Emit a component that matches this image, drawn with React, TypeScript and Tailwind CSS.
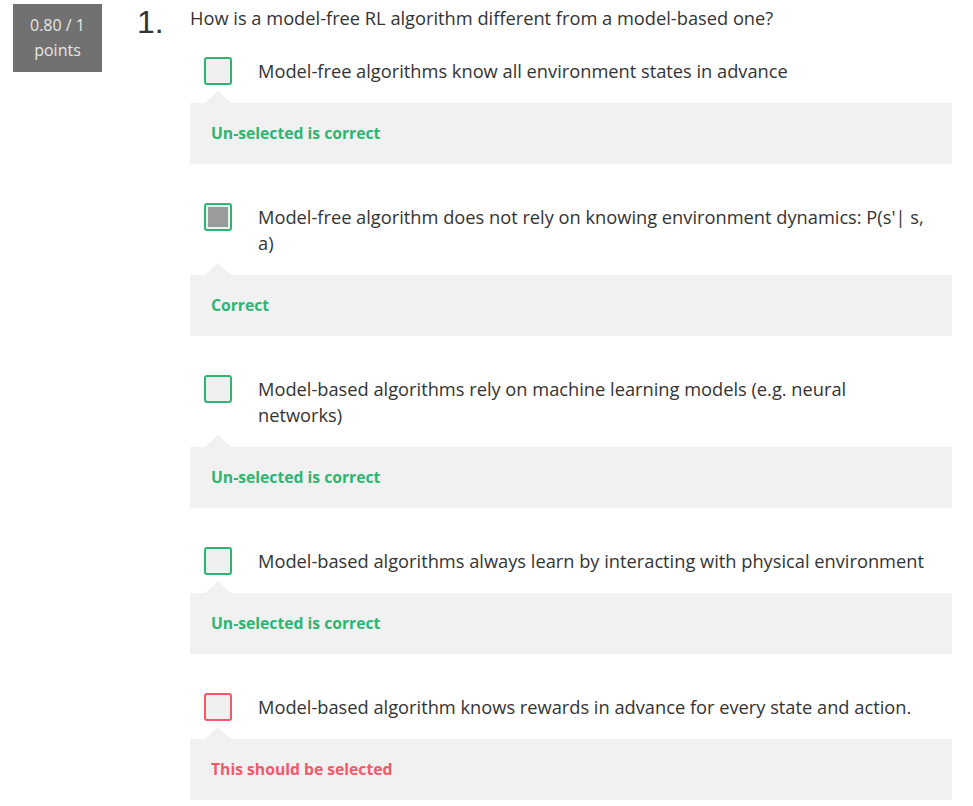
import React from 'react';

type Result = 'ok' | 'miss';

interface Option {
  text: string;
  checked: boolean;
  feedback: string;
  result: Result;
}

const options: Option[] = [
  {
    text: 'Model-free algorithms know all environment states in advance',
    checked: false,
    feedback: 'Un-selected is correct',
    result: 'ok',
  },
  {
    text: "Model-free algorithm does not rely on knowing environment dynamics: P(s'| s, a)",
    checked: true,
    feedback: 'Correct',
    result: 'ok',
  },
  {
    text: 'Model-based algorithms rely on machine learning models (e.g. neural networks)',
    checked: false,
    feedback: 'Un-selected is correct',
    result: 'ok',
  },
  {
    text: 'Model-based algorithms always learn by interacting with physical environment',
    checked: false,
    feedback: 'Un-selected is correct',
    result: 'ok',
  },
  {
    text: 'Model-based algorithm knows rewards in advance for every state and action.',
    checked: false,
    feedback: 'This should be selected',
    result: 'miss',
  },
];

const OptionRow: React.FC<{ option: Option }> = ({ option }) => {
  const ok = option.result === 'ok';
  return (
    <div>
      <div className="flex items-start pl-[14px]">
        {/* negative bottom margin so the box doesn't stretch the row */}
        <div
          className={`w-[28px] h-[28px] -mb-[4px] shrink-0 rounded-[3px] border-2 bg-[#f0f0f0] p-[2px] ${
            ok ? 'border-[#2db673]' : 'border-[#f4586a]'
          }`}
        >
          {option.checked && <div className="w-full h-full bg-[#9b9b9b]" />}
        </div>
        <div className="ml-[26px] mt-[1px] pr-[26px] text-[18.25px] leading-[26px] text-[#333]">
          {option.text}
        </div>
      </div>
      <div className="relative mt-[19px]">
        <div className="absolute left-[15px] -top-[12px] w-0 h-0 border-l-[13px] border-r-[13px] border-b-[12px] border-l-transparent border-r-transparent border-b-[#f1f1f1]" />
        <div className="bg-[#f1f1f1] h-[61px] flex items-center px-[21px]">
          <span
            className={`text-[15.7px] font-bold ${ok ? 'text-[#2db673]' : 'text-[#f4586a]'}`}
          >
            {option.feedback}
          </span>
        </div>
      </div>
    </div>
  );
};

export default function App() {
  return (
    <div
      className="w-[973px] h-[806px] bg-white overflow-hidden"
      style={{ fontFamily: '"Open Sans", sans-serif' }}
    >
      <div className="flex pt-[4px]">
        <div className="ml-[13px] w-[89px] h-[68px] bg-[#717171] text-[#e6e6e6] text-[16px] leading-[25px] flex flex-col items-center justify-center shrink-0">
          <div>0.80 / 1</div>
          <div>points</div>
        </div>
        <div
          className="ml-[35px] w-[53px] text-[32px] leading-[36px] text-[#333] shrink-0"
          style={{ fontFamily: '"Liberation Sans", Arial, sans-serif' }}
        >
          1.
        </div>
        <div className="flex-1 pr-[21px]">
          <div className="text-[18.25px] leading-[25px] text-[#333] mt-[1px]">
            How is a model-free RL algorithm different from a model-based one?
          </div>
          <div className="mt-[27px] flex flex-col gap-[39px]">
            {options.map((o, i) => (
              <OptionRow key={i} option={o} />
            ))}
          </div>
        </div>
      </div>
    </div>
  );
}
